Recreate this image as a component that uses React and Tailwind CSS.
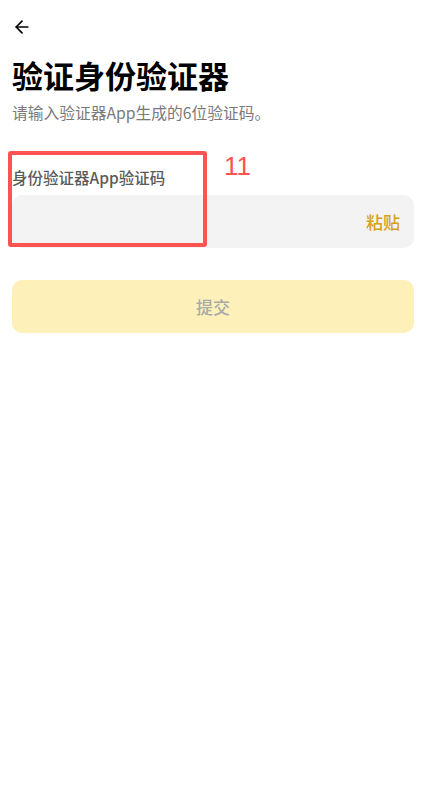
import { ArrowLeft } from 'lucide-react';

const font = { fontFamily: '"Noto Sans CJK SC", "Noto Sans", sans-serif' };

export default function App() {
  return (
    <div className="min-h-screen w-[429px] bg-white relative" style={font}>
      <div className="pl-3 pr-[15px] pt-[16px]">
        <button className="flex items-center h-[22px] text-black">
          <ArrowLeft className="h-[20px] w-[20px]" strokeWidth={2} />
        </button>

        <h1 className="mt-[17px] text-[31px] leading-[40px] font-bold text-black">
          验证身份验证器
        </h1>
        <p className="mt-[7px] text-[15.75px] leading-[22px] text-[#7a7a7a]">
          请输入验证器App生成的6位验证码。
        </p>

        {/* Input */}
        <div className="mt-[42px]">
          <p className="text-[15.5px] leading-[22px] font-medium text-[#5a5a5a]">
            身份验证器App验证码
          </p>
          <div className="mt-[7px] h-[53px] rounded-[10px] bg-[#f3f3f3] flex items-center justify-end pr-[14px]">
            <span className="text-[17px] font-medium text-[#d6a11a]">粘贴</span>
          </div>
        </div>

        <button className="mt-[32px] w-full h-[53px] rounded-[10px] bg-[#fdf0b9] flex items-center justify-center">
          <span className="text-[17px] font-medium text-[#a9a9a9]">提交</span>
        </button>
      </div>

      {/* annotation overlay */}
      <div className="absolute left-[8px] top-[151px] w-[199px] h-[96px] border-[4px] border-[#ff5252] rounded-[3px]" />
      <span
        className="absolute left-[224px] top-[149px] text-[26px] leading-[34px] text-[#ff5252]"
        style={{ fontFamily: '"Liberation Sans", sans-serif' }}
      >
        11
      </span>
    </div>
  );
}
